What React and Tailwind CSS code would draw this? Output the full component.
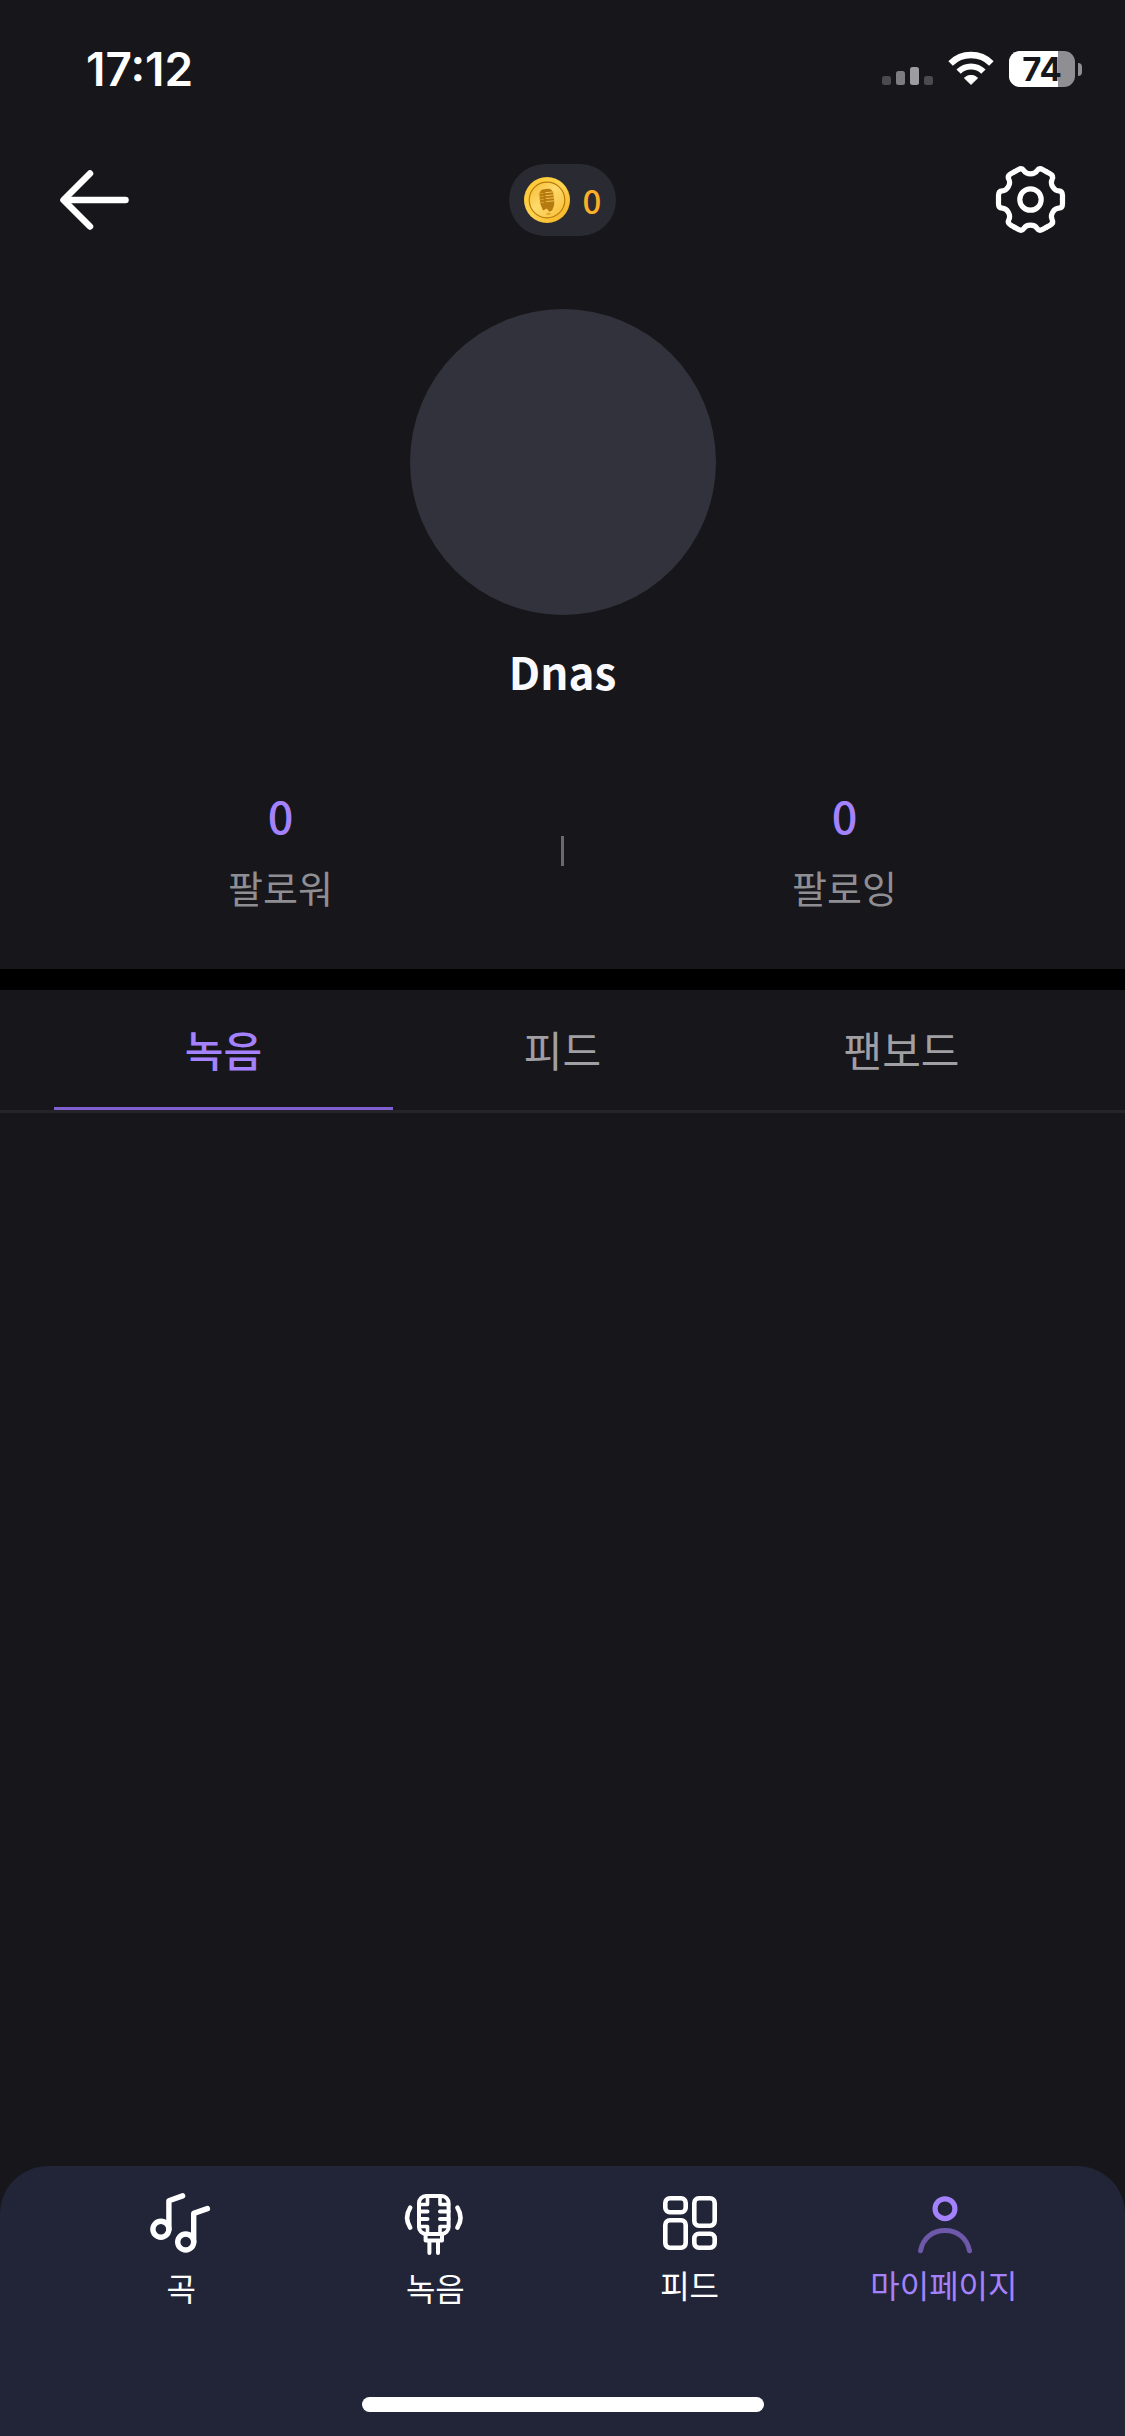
import React from 'react';
import clsx from 'clsx';

const TOOTH = 'M-16 -27.7 L-12.4 -29.8 Q-8.6 -32 -6.6 -28.8 Q-4.6 -25.6 0 -25.6 Q4.6 -25.6 6.6 -28.8 Q8.6 -32 12.4 -29.8 L16 -27.7';

function SignalIcon() {
  return (
    <svg className="h-9 w-[51px]" viewBox="0 0 51 36" aria-hidden="true">
      <rect x="0" y="25" width="9" height="9" rx="2.5" fill="#4b4a4f" />
      <rect x="14" y="20" width="9" height="14" rx="2.5" fill="#7d7c80" />
      <rect x="28" y="16" width="9" height="18" rx="2.5" fill="#9d9ca0" />
      <rect x="42" y="25" width="9" height="9" rx="2.5" fill="#4b4a4f" />
    </svg>
  );
}

function WifiIcon() {
  return (
    <svg className="h-9 w-[46px]" viewBox="0 0 46 36" fill="none" stroke="#fff" aria-hidden="true">
      <path d="M2.6 12.4 A29 29 0 0 1 43.4 12.4" strokeWidth="6.4" />
      <path d="M10.6 20.6 A17.6 17.6 0 0 1 35.4 20.6" strokeWidth="6.2" />
      <path d="M16.4 27 A9.6 9.6 0 0 1 29.6 27 L23 33.4 Z" fill="#fff" strokeWidth="1" strokeLinejoin="round" />
    </svg>
  );
}

function Battery({ level }) {
  return (
    <div className="flex items-center gap-[3px]">
      <div className="relative flex h-9 w-[66px] items-center justify-center rounded-[11px] bg-[#8f8e93]">
        <div className="absolute inset-y-0 left-0 rounded-l-[11px] bg-white" style={{ width: `${level}%` }} />
        <span className="relative text-[33px] leading-9 font-bold text-[#17161b]">{level}</span>
      </div>
      <div className="h-[13px] w-1 rounded-r-full bg-[#8f8e93]" />
    </div>
  );
}

function BackIcon() {
  return (
    <svg className="h-[72px] w-[72px]" viewBox="0 0 72 72" fill="none" stroke="#fff" strokeWidth="6.5" strokeLinecap="round" strokeLinejoin="round" aria-hidden="true">
      <path d="M32 9.5 L5.5 36 L32 62.5" />
      <path d="M8 36 H67.5" />
    </svg>
  );
}

function SettingsIcon() {
  return (
    <svg className="h-[72px] w-[72px]" viewBox="-35.5 -35.5 72 72" fill="none" stroke="#fff" strokeWidth="5.2" strokeLinecap="round" strokeLinejoin="round" aria-hidden="true">
      {[0, 60, 120, 180, 240, 300].map((angle) => (
        <path key={angle} d={TOOTH} transform={`rotate(${angle})`} />
      ))}
      <circle r="10.7" />
    </svg>
  );
}

function CoinIcon() {
  return (
    <svg className="h-[46px] w-[46px]" viewBox="0 0 46 46" fill="none" aria-hidden="true">
      <defs>
        <linearGradient id="coin-rim" x1="0" y1="0" x2="1" y2="1">
          <stop offset="0" stopColor="#ffc62e" />
          <stop offset="0.5" stopColor="#ffd34f" />
          <stop offset="1" stopColor="#f7ae1e" />
        </linearGradient>
        <linearGradient id="coin-face" x1="0" y1="0" x2="1" y2="1">
          <stop offset="0" stopColor="#f5b92c" />
          <stop offset="0.45" stopColor="#ffda6c" />
          <stop offset="1" stopColor="#f9bd35" />
        </linearGradient>
      </defs>
      <circle cx="23" cy="23" r="23" fill="url(#coin-rim)" />
      <circle cx="23" cy="23" r="17.8" fill="url(#coin-face)" stroke="#b87d0c" strokeWidth="1.2" />
      <g transform="rotate(-6 23 23)">
        <rect x="16" y="12" width="14" height="19" rx="5" fill="#b57a10" />
        <path d="M22 15.5 H31 M22 18.5 H31 M22 21.5 H31 M22 24.5 H31" stroke="#f3c14a" strokeWidth="1" />
        <path d="M15 16 H20 M15 19 H20 M15 22 H20 M15 25 H20" stroke="#e0a52c" strokeWidth="0.8" />
        <path d="M16.5 28 L18 33 L22 31.5 L24 35 L27 34 L30 28" fill="#b57a10" />
        <path d="M21 37 H25" stroke="#d79b22" strokeWidth="1.4" />
      </g>
    </svg>
  );
}

function SongIcon() {
  return (
    <svg className="h-[66px] w-[62px]" viewBox="0 0 62 66" fill="none" stroke="#fff" strokeWidth="5.4" strokeLinecap="round" strokeLinejoin="round" aria-hidden="true">
      <circle cx="10.9" cy="36.3" r="8" />
      <path d="M18.9 36.3 V7.7 L32.6 2.9" />
      <circle cx="35.7" cy="49" r="8" />
      <path d="M43.7 49 V20.4 L57.4 15.6" />
    </svg>
  );
}

function MicIcon() {
  return (
    <svg className="h-[66px] w-[60px] overflow-visible" viewBox="0 0 60 66" fill="none" stroke="#fff" strokeWidth="4" strokeLinecap="round" strokeLinejoin="round" aria-hidden="true">
      <rect x="14" y="3" width="29.6" height="38" rx="7" />
      <path d="M14 11.5 H22.5 V3 M43.6 11.5 H35 V3 M14 33.5 H22.5 V41 M43.6 33.5 H35 V41" strokeWidth="3.6" />
      <path d="M14 18.4 H22.5 M14 26 H22.5 M43.6 18.4 H35 M43.6 26 H35" />
      <path d="M20.6 42 V47.5 H37 V42" />
      <path d="M24.4 48 V60 M33 48 V60" />
      <path d="M5.2 14.6 Q-1 24.6 5.2 34.6 M52.4 14.6 Q58.6 24.6 52.4 34.6" strokeWidth="4.6" />
    </svg>
  );
}

function FeedIcon() {
  return (
    <svg className="h-[63px] w-[54px]" viewBox="0 -3 54 63" fill="none" stroke="#fff" strokeWidth="4.6" aria-hidden="true">
      <rect x="2.3" y="2.3" width="20.4" height="14" rx="4.6" />
      <rect x="2.3" y="24.3" width="20.4" height="27.4" rx="4.6" />
      <rect x="31.3" y="2.3" width="20.4" height="27.4" rx="4.6" />
      <rect x="31.3" y="37.7" width="20.4" height="14" rx="4.6" />
    </svg>
  );
}

function UserIcon() {
  return (
    <svg className="h-[63px] w-[56px]" viewBox="-2 -3 56 63" fill="none" stroke="#a482fd" strokeWidth="5" strokeLinecap="round" aria-hidden="true">
      <circle cx="27" cy="12.7" r="9.9" strokeWidth="5.2" />
      <path d="M2.5 54.8 C5 42 14.5 34.6 27 34.6 C39.5 34.6 49 42 51.5 54.8" stroke="#6d58a9" />
    </svg>
  );
}

const stats = [
  { label: '팔로워', value: 0 },
  { label: '팔로잉', value: 0 },
];

const tabs = ['녹음', '피드', '팬보드'];

const navItems = [
  { label: '곡', Icon: SongIcon },
  { label: '녹음', Icon: MicIcon },
  { label: '피드', Icon: FeedIcon },
  { label: '마이페이지', Icon: UserIcon, active: true },
];

function Stat({ label, value }) {
  return (
    <a href="#" className="flex flex-1 flex-col items-center gap-4">
      <span className="text-[45px] leading-14 font-medium text-[#a482fd]">{value}</span>
      <span className="text-[38px] leading-14 text-[#8f8e93]">{label}</span>
    </a>
  );
}

export default function App() {
  return (
    <div className="flex min-h-screen flex-col bg-[#17161b] font-['Noto_Sans_CJK_KR',sans-serif] text-white">
      <div className="flex h-[132px] items-center justify-between pt-1.5 pr-[43px] pl-[86px] font-['Inter',sans-serif]">
        <span className="text-[46px] leading-none font-semibold">17:12</span>
        <div className="flex items-center gap-[15px]">
          <SignalIcon />
          <WifiIcon />
          <Battery level={74} />
        </div>
      </div>

      <header className="grid h-[136px] grid-cols-3 items-center px-[58px]">
        <button type="button" aria-label="뒤로" className="justify-self-start">
          <BackIcon />
        </button>
        <button type="button" className="flex h-[72px] items-center gap-[13px] justify-self-center rounded-full bg-[#2a2a33] px-[15px]">
          <CoinIcon />
          <span className="text-[33px] leading-12 font-medium text-[#fbaf29]">0</span>
        </button>
        <button type="button" aria-label="설정" className="justify-self-end">
          <SettingsIcon />
        </button>
      </header>

      <section className="flex flex-col items-center pt-[41px] pb-[54px]">
        <div className="h-[306px] w-[306px] rounded-full bg-[#32323c]" />
        <h1 className="mt-6 text-[44px] leading-16 font-bold text-[#fafafe]">Dnas</h1>
        <div className="mt-[84px] flex w-full items-center">
          <Stat {...stats[0]} />
          <div className="h-[30px] w-[3px] bg-[#6a696e]" />
          <Stat {...stats[1]} />
        </div>
      </section>

      <div className="h-[21px] bg-black" />

      <div role="tablist" className="flex border-b-3 border-[#25242a] px-[54px]">
        {tabs.map((tab, index) => (
          <button
            key={tab}
            type="button"
            role="tab"
            aria-selected={index === 0}
            className={clsx(
              'h-[120px] flex-1 border-b-3 text-[42px] leading-15',
              index === 0 ? 'border-[#8060d0] font-medium text-[#a482fd]' : 'border-transparent text-[#a09fa4]',
            )}
          >
            {tab}
          </button>
        ))}
      </div>

      <main className="flex-1" />

      <nav className="flex flex-col rounded-t-[48px] bg-[#222538] px-[54px] pt-[27px] pb-6">
        <div className="flex items-start">
          {navItems.map(({ label, Icon, active }) => (
            <a
              key={label}
              href="#"
              className={clsx('flex flex-1 flex-col items-center gap-1', active ? 'text-[#a482fd]' : 'text-white')}
            >
              <Icon />
              <span className="text-[32px] leading-12">{label}</span>
            </a>
          ))}
        </div>
        <div className="mt-[86px] h-[15px] w-[402px] self-center rounded-full bg-white" />
      </nav>
    </div>
  );
}
